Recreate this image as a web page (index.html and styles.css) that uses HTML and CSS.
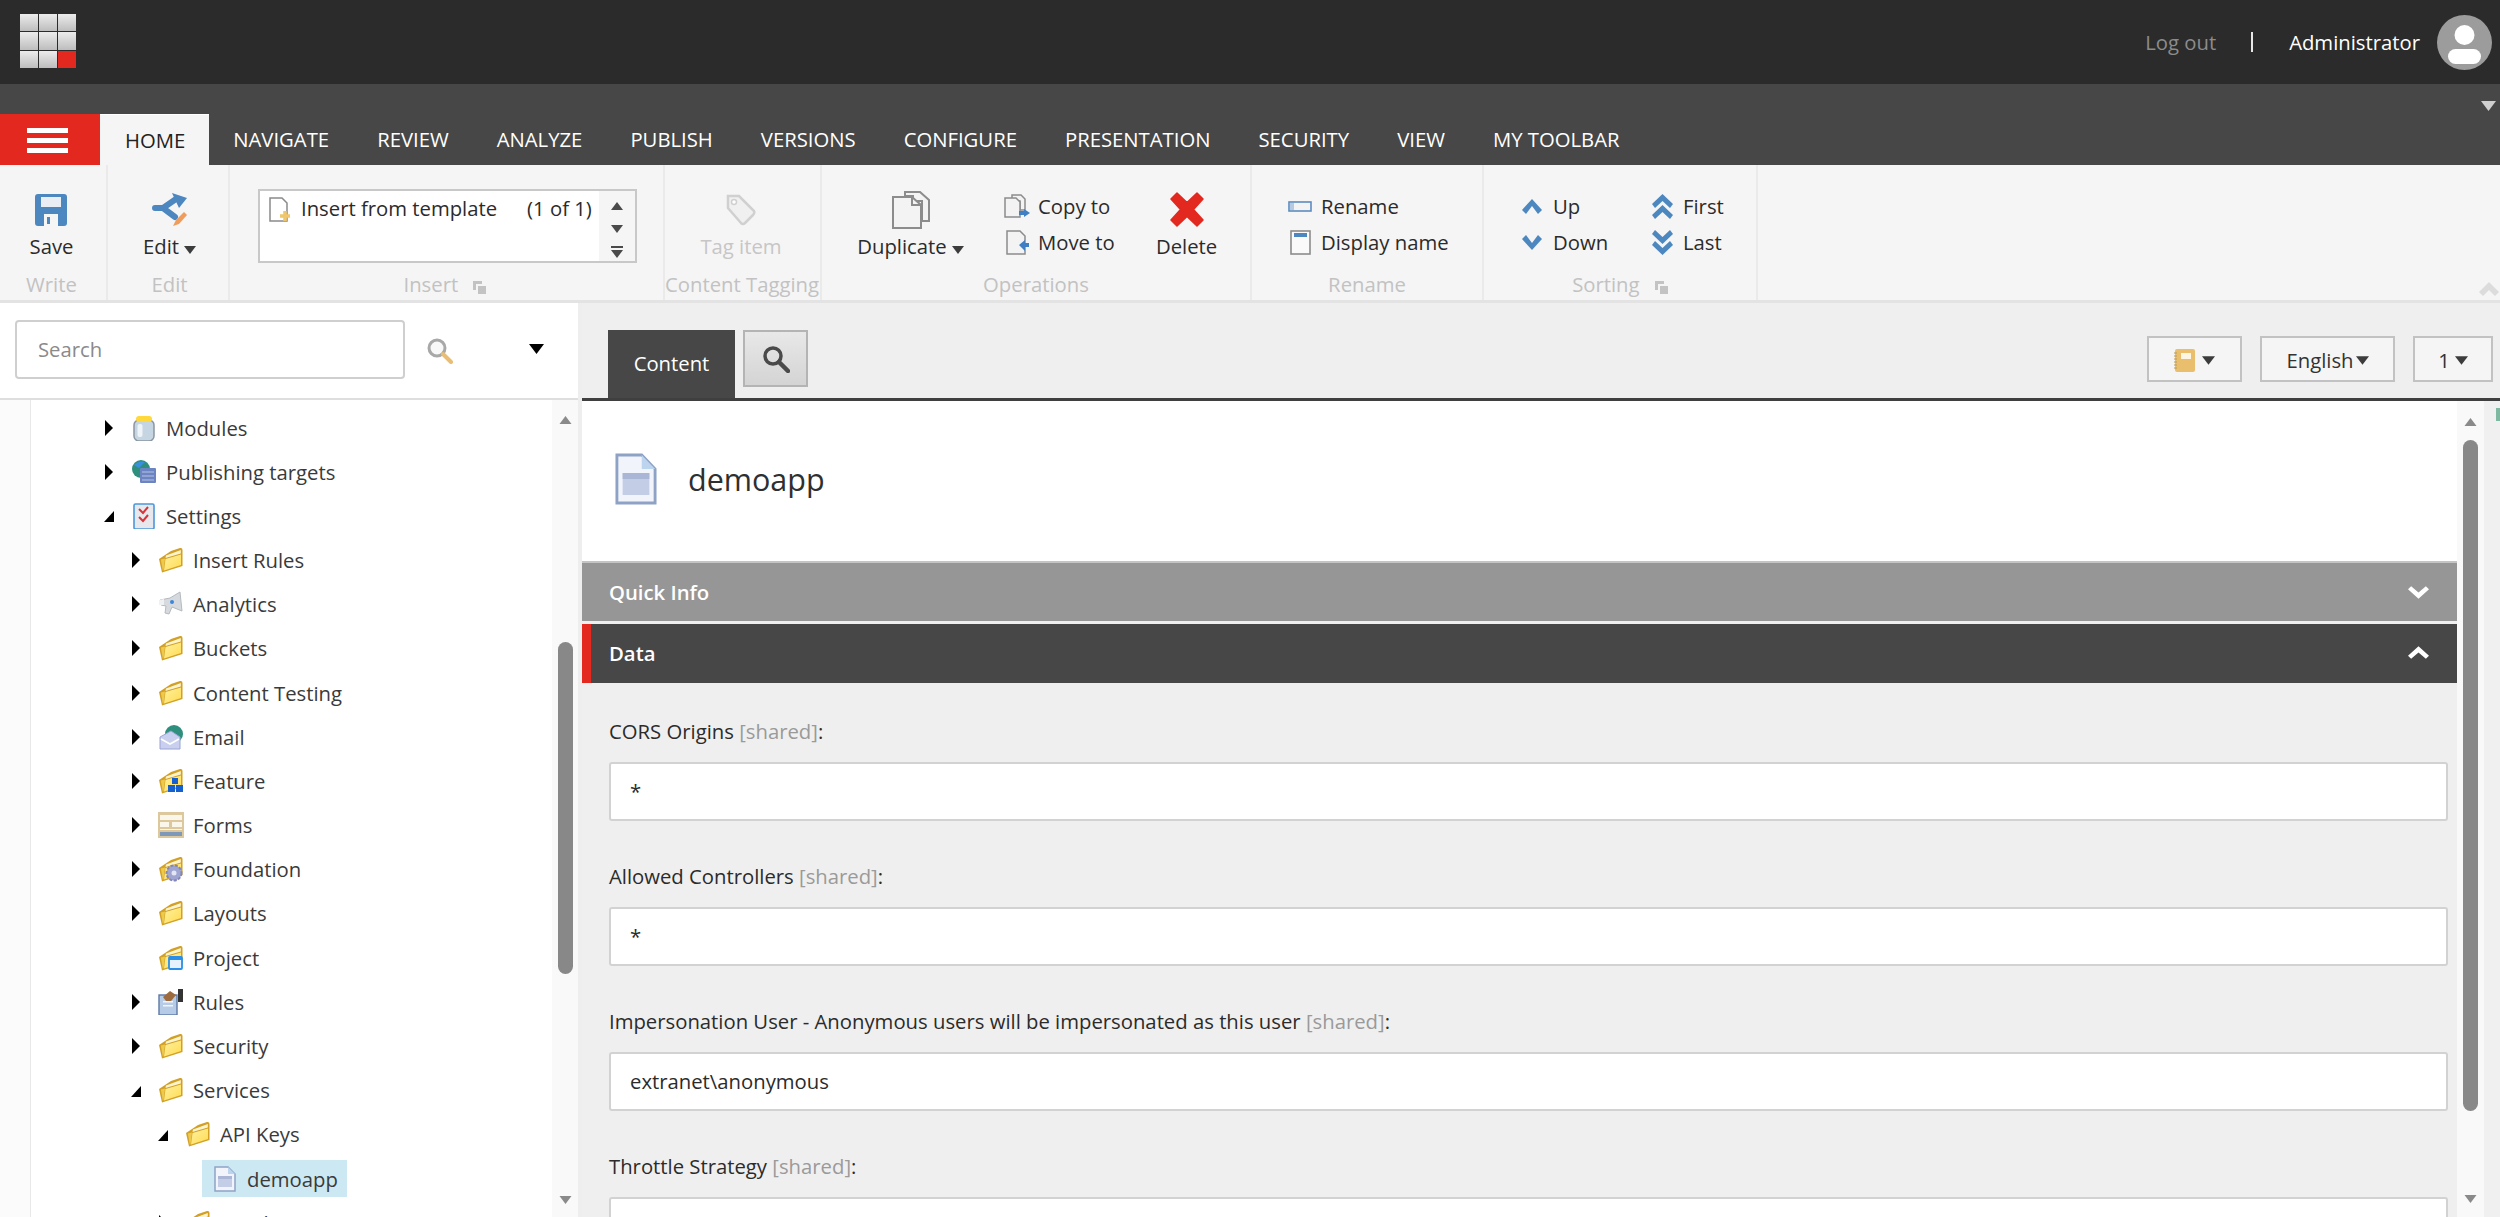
FILE: index.html
```html
<!doctype html>
<html lang="en">
	<head>
		<meta charset="UTF-8">
		<title>Content Editor</title>
		<link rel="stylesheet" href="styles.css">
	</head>
	<body>
		<svg class="defs" xmlns="http://www.w3.org/2000/svg">
			<defs>
				<linearGradient id="folder-fill" x1="0" y1="0" x2="1" y2="1">
					<stop offset="0" stop-color="#fff0a0"/>
					<stop offset="1" stop-color="#ffdc50"/>
				</linearGradient>
			</defs>
			<symbol id="tri-r" viewBox="0 0 10 16"><path d="M1 0L9 8L1 16Z" fill="#000"/></symbol>
			<symbol id="tri-o" viewBox="0 0 10 11"><path d="M10 0V11H0Z" fill="#000"/></symbol>
			<symbol id="tri-d" viewBox="0 0 12 8"><path d="M0 0H12L6 8Z"/></symbol>
			<symbol id="tri-u" viewBox="0 0 12 8"><path d="M6 0L12 8H0Z"/></symbol>
			<symbol id="folder" viewBox="0 0 26 26">
				<path d="M1 12L13 4L22 1Q24.500 0.500 24.500 3V19L4 25.500Z" fill="#d2a024"/>
				<path d="M2.800 12.600L7 11.500L5.500 23.500L4.800 23.500Z" fill="#edc94e"/>
				<path d="M8 8.500L22.800 3V6.500L7.500 11Z" fill="#fdf4cc"/>
				<path d="M7.500 12L23 7.500V18L6 23.500Z" fill="url(#folder-fill)"/>
			</symbol>
			<symbol id="doc" viewBox="0 0 22 26">
				<path d="M1 1H14L21 8V25H1Z" fill="#f1f4fb" stroke="#8ea2c6" stroke-width="1.500"/>
				<path d="M14 1V8H21Z" fill="#bcd4ee"/>
				<rect x="4" y="10" width="14" height="11" fill="#c3cde6"/>
				<rect x="4" y="10" width="14" height="3" fill="#a9b6d6"/>
			</symbol>
		</svg>

		<div class="topbar">
			<div class="logo">
				<i></i><i></i><i></i>
				<i></i><i></i><i></i>
				<i></i><i></i><i class="logo-red"></i>
			</div>
			<a class="logout">Log out</a>
			<span class="divider"></span>
			<span class="username">Administrator</span>
			<svg class="avatar" viewBox="0 0 55 55">
				<circle cx="27.500" cy="27.500" r="27.500" fill="#9c9c9c"/>
				<circle cx="27.500" cy="20" r="10" fill="#fff"/>
				<rect x="11" y="34" width="33" height="15" rx="7.500" fill="#fff"/>
			</svg>
		</div>

		<div class="navbar">
			<div class="navbar-top">
				<svg class="nav-arrow"><use href="#tri-d"/></svg>
			</div>
			<div class="tabs">
				<div class="menu-btn"><i></i><i></i><i></i></div>
				<a class="tab tab-active">HOME</a>
				<a class="tab">NAVIGATE</a>
				<a class="tab">REVIEW</a>
				<a class="tab">ANALYZE</a>
				<a class="tab">PUBLISH</a>
				<a class="tab">VERSIONS</a>
				<a class="tab">CONFIGURE</a>
				<a class="tab">PRESENTATION</a>
				<a class="tab">SECURITY</a>
				<a class="tab">VIEW</a>
				<a class="tab">MY TOOLBAR</a>
			</div>
		</div>

		<div class="ribbon">
			<div class="group g-write">
				<div class="group-body center">
					<div class="big">
						<div class="big-icon">
							<svg width="32" height="32" viewBox="0 0 32 32">
								<path d="M3 0H29Q32 0 32 3V29Q32 32 29 32H3Q0 32 0 29V3Q0 0 3 0Z" fill="#4d87c0"/>
								<rect x="6" y="3" width="20" height="10" fill="#e9eef5"/>
								<rect x="9" y="20" width="14" height="12" fill="#f5f5f5"/>
								<rect x="12" y="23" width="3" height="7" fill="#4d87c0"/>
							</svg>
						</div>
						<span>Save</span>
					</div>
				</div>
				<div class="group-label">Write</div>
			</div>
			<div class="group g-edit">
				<div class="group-body center">
					<div class="big">
						<div class="big-icon">
							<svg width="36" height="36" viewBox="0 0 36 36">
								<path d="M3 16H11L24 7M11 16L23 25" fill="none" stroke="#4d87c0" stroke-width="6" stroke-linecap="round"/>
								<path d="M20 1L35 6L27 16Z" fill="#4d87c0"/>
								<path d="M21 34L24 28L32 20L35 23L27 32Z" fill="#ee9d5c"/>
							</svg>
						</div>
						<span>Edit<svg class="caret"><use href="#tri-d"/></svg></span>
					</div>
				</div>
				<div class="group-label">Edit</div>
			</div>
			<div class="group g-insert">
				<div class="group-body">
					<div class="gallery">
						<div class="gallery-item">
							<svg width="22" height="25" viewBox="0 0 22 25">
								<path d="M1 1H13L18 6V24H1Z" fill="#fff" stroke="#8a8a8a" stroke-width="1.500"/>
								<path d="M16 14V24M11 19H21" stroke="#f0c66a" stroke-width="3.500"/>
							</svg>
							<span class="gallery-name">Insert from template</span>
							<span class="gallery-count">(1 of 1)</span>
						</div>
						<div class="gallery-scroll">
							<svg><use href="#tri-u"/></svg>
							<svg><use href="#tri-d"/></svg>
							<svg class="gallery-more" viewBox="0 0 12 12"><path d="M0 0H12V2H0ZM0 4H12L6 12Z"/></svg>
						</div>
					</div>
				</div>
				<div class="group-label label-shift">Insert
					<svg class="launcher" viewBox="0 0 13 13"><path d="M0 0H9V3H3V9H0ZM5 5H13V13H5Z" fill="#c3c3c3"/></svg>
				</div>
			</div>
			<div class="group g-tag">
				<div class="group-body center">
					<div class="big big-off">
						<div class="big-icon">
							<svg width="30" height="32" viewBox="0 0 30 32">
								<path d="M2 2H13L28 17Q29 19 27 21L19 29Q17 31 15 29L2 14Z" fill="#f0f0f0" stroke="#d0d0d0" stroke-width="2.500"/>
								<circle cx="8" cy="8" r="2.500" fill="#fff" stroke="#d0d0d0" stroke-width="1.500"/>
							</svg>
						</div>
						<span>Tag item</span>
					</div>
				</div>
				<div class="group-label">Content Tagging</div>
			</div>
			<div class="group g-ops">
				<div class="group-body">
					<div class="big big-dup">
						<div class="big-icon">
							<svg width="38" height="38" viewBox="0 0 38 38">
								<path d="M13 1H28L37 9V30H30V10L21 10V5H13Z" fill="#f3f3f3" stroke="#8c8c8c" stroke-width="2"/>
								<path d="M1 6H20L29 14V37H1Z" fill="#f3f3f3" stroke="#8c8c8c" stroke-width="2"/>
								<path d="M20 6V14H29" fill="none" stroke="#8c8c8c" stroke-width="2"/>
							</svg>
						</div>
						<span>Duplicate<svg class="caret"><use href="#tri-d"/></svg></span>
					</div>
					<div class="small-col col-ops">
						<div class="small">
							<div class="small-icon">
								<svg width="26" height="24" viewBox="0 0 26 24">
									<path d="M8 1H17L21 5V16H16V7H8Z" fill="#f3f3f3" stroke="#8c8c8c" stroke-width="1.500"/>
									<path d="M1 4H12L16 8V23H1Z" fill="#f3f3f3" stroke="#8c8c8c" stroke-width="1.500"/>
									<path d="M26 19L20 15V17H15V21H20V23Z" fill="#3f7fc4"/>
								</svg>
							</div>
							<span>Copy to</span>
						</div>
						<div class="small">
							<div class="small-icon">
								<svg width="24" height="25" viewBox="0 0 24 25">
									<path d="M2 1H15L20 6V24H2Z" fill="#f3f3f3" stroke="#8c8c8c" stroke-width="1.500"/>
									<path d="M14 15L20 10V13H24V17H20V21Z" fill="#3f7fc4"/>
								</svg>
							</div>
							<span>Move to</span>
						</div>
					</div>
					<div class="big">
						<div class="big-icon">
							<svg width="34" height="35" viewBox="0 0 34 35">
								<path d="M7 1L17 10.500L27 1L33 7L23.500 17.500L33 28L27 34L17 24.500L7 34L1 28L10.500 17.500L1 7Z" fill="#e2281f" stroke="#e2281f" stroke-width="1.500" stroke-linejoin="round"/>
							</svg>
						</div>
						<span>Delete</span>
					</div>
				</div>
				<div class="group-label">Operations</div>
			</div>
			<div class="group g-rename">
				<div class="group-body">
					<div class="small-col">
						<div class="small">
							<div class="small-icon">
								<svg width="24" height="11" viewBox="0 0 24 11">
									<rect x="1" y="1" width="22" height="9" fill="#f3f3f3" stroke="#5d8cc0" stroke-width="1.600"/>
									<rect x="2" y="2" width="4" height="7" fill="#b5c9e0"/>
								</svg>
							</div>
							<span>Rename</span>
						</div>
						<div class="small">
							<div class="small-icon">
								<svg width="21" height="25" viewBox="0 0 21 25">
									<rect x="1" y="1" width="19" height="23" fill="#fafafa" stroke="#8c8c8c" stroke-width="1.600"/>
									<rect x="4" y="3" width="13" height="4" fill="#4d87c0"/>
								</svg>
							</div>
							<span>Display name</span>
						</div>
					</div>
				</div>
				<div class="group-label">Rename</div>
			</div>
			<div class="group g-sort">
				<div class="group-body">
					<div class="small-col col-sort">
						<div class="small">
							<div class="small-icon">
								<svg width="20" height="15" viewBox="0 0 20 15"><path d="M10 0L20 11L16 15L10 7L4 15L0 11Z" fill="#4d87c0"/></svg>
							</div>
							<span>Up</span>
						</div>
						<div class="small">
							<div class="small-icon">
								<svg width="20" height="15" viewBox="0 0 20 15"><path d="M10 15L20 4L16 0L10 8L4 0L0 4Z" fill="#4d87c0"/></svg>
							</div>
							<span>Down</span>
						</div>
					</div>
					<div class="small-col">
						<div class="small">
							<div class="small-icon">
								<svg width="21" height="25" viewBox="0 0 21 25"><path d="M10.500 0L21 10L18 14L10.500 7L3 14L0 10ZM10.500 11L21 21L18 25L10.500 18L3 25L0 21Z" fill="#4d87c0"/></svg>
							</div>
							<span>First</span>
						</div>
						<div class="small">
							<div class="small-icon">
								<svg width="21" height="25" viewBox="0 0 21 25"><path d="M10.500 25L21 15L18 11L10.500 18L3 11L0 15ZM10.500 14L21 4L18 0L10.500 7L3 0L0 4Z" fill="#4d87c0"/></svg>
							</div>
							<span>Last</span>
						</div>
					</div>
				</div>
				<div class="group-label">Sorting
					<svg class="launcher" viewBox="0 0 13 13"><path d="M0 0H9V3H3V9H0ZM5 5H13V13H5Z" fill="#c3c3c3"/></svg>
				</div>
			</div>
			<svg class="ribbon-collapse" viewBox="0 0 20 14"><path d="M10 0L20 10L16 14L10 8L4 14L0 10Z" fill="#dcdcdc"/></svg>
		</div>

		<div class="main">
			<div class="left">
				<div class="search-row">
					<div class="search-box">Search</div>
					<svg class="search-icon" viewBox="0 0 26 26">
						<circle cx="10" cy="10" r="8" fill="#f8f8f8" stroke="#a8a8a8" stroke-width="3"/>
						<path d="M16 16L24 24" stroke="#e9bd74" stroke-width="4" stroke-linecap="round"/>
					</svg>
					<svg class="search-drop"><use href="#tri-d"/></svg>
				</div>
				<div class="tree-wrap">
					<div class="tree-strip"></div>
					<div class="tree">
						<div class="row l1">
							<svg class="arrow"><use href="#tri-r"/></svg>
							<svg class="ico" viewBox="0 0 26 26">
								<rect x="3" y="5" width="20" height="21" rx="5" fill="#c5d5e2" stroke="#8b97a3" stroke-width="1.500"/>
								<rect x="6.500" y="9" width="5" height="13" rx="2" fill="#eef4f8"/>
								<rect x="5" y="1" width="16" height="6" rx="3" fill="#ffd83b"/>
							</svg>
							<span>Modules</span>
						</div>
						<div class="row l1">
							<svg class="arrow"><use href="#tri-r"/></svg>
							<svg class="ico" viewBox="0 0 26 26">
								<circle cx="10" cy="10" r="9" fill="#2e8f7c"/>
								<path d="M3 6Q8 1 14 3L8 9Z" fill="#3b8fe0"/>
								<rect x="9" y="9" width="16" height="15" rx="1" fill="#6d84c2"/>
								<path d="M11 13H23M11 17H23M11 21H23" stroke="#b6c4e6" stroke-width="1.200"/>
							</svg>
							<span>Publishing targets</span>
						</div>
						<div class="row l1">
							<svg class="arrow arrow-open"><use href="#tri-o"/></svg>
							<svg class="ico" viewBox="0 0 26 26">
								<rect x="3" y="1" width="20" height="25" rx="1.500" fill="#e8e8ec" stroke="#4a97dc" stroke-width="1.600"/>
								<path d="M8 6L12 10L17 4M8 14L12 18L17 12" fill="none" stroke="#d8323a" stroke-width="2"/>
							</svg>
							<span>Settings</span>
						</div>
						<div class="row l2">
							<svg class="arrow"><use href="#tri-r"/></svg>
							<svg class="ico"><use href="#folder"/></svg>
							<span>Insert Rules</span>
						</div>
						<div class="row l2">
							<svg class="arrow"><use href="#tri-r"/></svg>
							<svg class="ico" viewBox="0 0 26 26">
								<path d="M2 9L12 7L22 1L24 20L14 16L11 23L7 22L8 15L3 14Z" fill="#d6dade" stroke="#b5babf"/>
								<circle cx="14" cy="11" r="2" fill="#3b86d6"/>
								<path d="M1 9L6 8V14L1 14Z" fill="#eef0f2"/>
							</svg>
							<span>Analytics</span>
						</div>
						<div class="row l2">
							<svg class="arrow"><use href="#tri-r"/></svg>
							<svg class="ico"><use href="#folder"/></svg>
							<span>Buckets</span>
						</div>
						<div class="row l2">
							<svg class="arrow"><use href="#tri-r"/></svg>
							<svg class="ico"><use href="#folder"/></svg>
							<span>Content Testing</span>
						</div>
						<div class="row l2">
							<svg class="arrow"><use href="#tri-r"/></svg>
							<svg class="ico" viewBox="0 0 26 26">
								<circle cx="16" cy="10" r="9" fill="#2e8f7c"/>
								<path d="M2 13L13 7L22 13V25H2Z" fill="#c9cfee" stroke="#9aa3d6"/>
								<path d="M3 15L12 20L21 15" fill="none" stroke="#fff" stroke-width="1.600"/>
							</svg>
							<span>Email</span>
						</div>
						<div class="row l2">
							<svg class="arrow"><use href="#tri-r"/></svg>
							<svg class="ico" viewBox="0 0 26 26">
								<use href="#folder"/>
								<rect x="14" y="10" width="6" height="6" fill="#1560cf"/>
								<rect x="10" y="17" width="7" height="7" fill="#1560cf"/>
								<rect x="18" y="17" width="7" height="7" fill="#1560cf"/>
							</svg>
							<span>Feature</span>
						</div>
						<div class="row l2">
							<svg class="arrow"><use href="#tri-r"/></svg>
							<svg class="ico" viewBox="0 0 26 26">
								<rect x="0" y="0" width="26" height="26" fill="#dcc89c"/>
								<rect x="2" y="3" width="22" height="5" fill="#faf6ea"/>
								<rect x="2" y="10" width="9" height="5" fill="#faf6ea"/>
								<rect x="14" y="10" width="10" height="5" fill="#faf6ea"/>
								<rect x="2" y="17" width="22" height="1" fill="#faf6ea"/>
								<rect x="2" y="20" width="22" height="4" fill="#7d98b8"/>
							</svg>
							<span>Forms</span>
						</div>
						<div class="row l2">
							<svg class="arrow"><use href="#tri-r"/></svg>
							<svg class="ico" viewBox="0 0 26 26">
								<use href="#folder"/>
								<circle cx="16" cy="17" r="7.500" fill="#9fa5d0" stroke="#8187b8" stroke-dasharray="3 1.500" stroke-width="2"/>
								<circle cx="16" cy="17" r="2.500" fill="#e4e6f4"/>
							</svg>
							<span>Foundation</span>
						</div>
						<div class="row l2">
							<svg class="arrow"><use href="#tri-r"/></svg>
							<svg class="ico"><use href="#folder"/></svg>
							<span>Layouts</span>
						</div>
						<div class="row l2">
							<span class="arrow"></span>
							<svg class="ico" viewBox="0 0 26 26">
								<use href="#folder"/>
								<rect x="11" y="12" width="13" height="12" rx="1" fill="#e6f2fd" stroke="#2a8fe8" stroke-width="1.800"/>
								<rect x="11" y="12" width="13" height="3" fill="#2a8fe8"/>
							</svg>
							<span>Project</span>
						</div>
						<div class="row l2">
							<svg class="arrow"><use href="#tri-r"/></svg>
							<svg class="ico" viewBox="0 0 26 26">
								<rect x="1" y="6" width="18" height="20" fill="#b6cbe6" stroke="#5e78a4" stroke-width="1.400"/>
								<rect x="5" y="12" width="10" height="1.500" fill="#f1f5fb"/>
								<rect x="5" y="16" width="10" height="1.500" fill="#f1f5fb"/>
								<path d="M5 8L12 2L18 6L13 12L8 12Z" fill="#9c6a3c"/>
								<rect x="20" y="0" width="5" height="13" fill="#333"/>
							</svg>
							<span>Rules</span>
						</div>
						<div class="row l2">
							<svg class="arrow"><use href="#tri-r"/></svg>
							<svg class="ico"><use href="#folder"/></svg>
							<span>Security</span>
						</div>
						<div class="row l2">
							<svg class="arrow arrow-open"><use href="#tri-o"/></svg>
							<svg class="ico"><use href="#folder"/></svg>
							<span>Services</span>
						</div>
						<div class="row l3">
							<svg class="arrow arrow-open"><use href="#tri-o"/></svg>
							<svg class="ico"><use href="#folder"/></svg>
							<span>API Keys</span>
						</div>
						<div class="row l-sel">
							<div class="selected">
								<svg class="ico"><use href="#doc"/></svg>
								<span>demoapp</span>
							</div>
						</div>
						<div class="row l3">
							<svg class="arrow"><use href="#tri-r"/></svg>
							<svg class="ico"><use href="#folder"/></svg>
							<span>Rendering Hosts</span>
						</div>
					</div>
					<div class="scroll scroll-left">
						<svg class="scroll-arrow"><use href="#tri-u"/></svg>
						<div class="thumb"></div>
						<svg class="scroll-arrow scroll-down"><use href="#tri-d"/></svg>
					</div>
				</div>
			</div>

			<div class="gutter"></div>

			<div class="right">
				<div class="editor-head">
					<div class="content-tab">Content</div>
					<div class="find-btn">
						<svg width="28" height="28" viewBox="0 0 28 28">
							<circle cx="11" cy="11" r="8" fill="none" stroke="#4a4a4a" stroke-width="3.500"/>
							<path d="M17 17L26 26" stroke="#4a4a4a" stroke-width="4.500" stroke-linecap="round"/>
						</svg>
					</div>
					<div class="head-buttons">
						<div class="head-btn btn-note">
							<svg width="21" height="23" viewBox="0 0 21 23">
								<rect x="1" y="0" width="20" height="23" rx="2" fill="#e9bf6e"/>
								<rect x="7" y="4" width="10" height="6" fill="#fdf6e4"/>
								<path d="M0 4H3M0 7H3M0 10H3M0 13H3M0 16H3M0 19H3" stroke="#b89855" stroke-width="1"/>
							</svg>
							<svg class="head-caret"><use href="#tri-d"/></svg>
						</div>
						<div class="head-btn btn-lang">English<svg class="head-caret"><use href="#tri-d"/></svg></div>
						<div class="head-btn btn-ver">1<svg class="head-caret"><use href="#tri-d"/></svg></div>
					</div>
				</div>
				<div class="editor-body">
					<div class="editor">
						<div class="title">
							<svg class="title-icon" viewBox="0 0 22 26" preserveAspectRatio="none"><use href="#doc"/></svg>
							<span>demoapp</span>
						</div>
						<div class="section section-closed">
							<span>Quick Info</span>
							<svg class="chev" viewBox="0 0 20 12"><path d="M10 12L20 3L17 0L10 6L3 0L0 3Z" fill="#fff"/></svg>
						</div>
						<div class="section section-open">
							<span>Data</span>
							<svg class="chev" viewBox="0 0 20 12"><path d="M10 0L20 9L17 12L10 6L3 12L0 9Z" fill="#fff"/></svg>
						</div>
						<div class="fields">
							<div class="field">
								<label>CORS Origins <span class="shared">[shared]</span>:</label>
								<input class="field-input" type="text" value="*">
							</div>
							<div class="field">
								<label>Allowed Controllers <span class="shared">[shared]</span>:</label>
								<input class="field-input" type="text" value="*">
							</div>
							<div class="field">
								<label>Impersonation User - Anonymous users will be impersonated as this user <span class="shared">[shared]</span>:</label>
								<input class="field-input" type="text" value="extranet\anonymous">
							</div>
							<div class="field">
								<label>Throttle Strategy <span class="shared">[shared]</span>:</label>
								<input class="field-input" type="text" value="">
							</div>
						</div>
					</div>
					<div class="scroll scroll-right">
						<svg class="scroll-arrow"><use href="#tri-u"/></svg>
						<div class="thumb"></div>
						<svg class="scroll-arrow scroll-down"><use href="#tri-d"/></svg>
					</div>
					<div class="overview"><i></i></div>
				</div>
			</div>
		</div>
	</body>
</html>
```
FILE: styles.css
```css
* {
	box-sizing: border-box;
}
html, body {
	margin: 0;
	height: 1217px;
	overflow: hidden;
}
body {
	font-family: "Open Sans", "Liberation Sans", sans-serif;
	font-size: 20.300px;
	color: #2b2b2b;
	background: #f0f0f0;
}
.defs {
	position: absolute;
	width: 0;
	height: 0;
}

/* top bar */
.topbar {
	height: 84px;
	background: #2b2b2b;
	display: flex;
	align-items: center;
	padding: 0 8px 0 20px;
}
.logo {
	display: grid;
	grid-template-columns: repeat(3, 18px);
	grid-auto-rows: 17.500px;
	gap: 1px;
	margin-top: -2px;
}
.logo i {
	background: linear-gradient(#ececec, #bdbdbd);
}
.logo .logo-red {
	background: #e2281f;
}
.logout {
	margin-left: auto;
	color: #8b8b8b;
}
.divider {
	width: 2px;
	height: 20px;
	background: #e8e8e8;
	margin: 0 36px 0 35px;
}
.username {
	color: #fff;
}
.avatar {
	width: 55px;
	height: 55px;
	margin-left: 17px;
}

/* tabs */
.navbar {
	height: 81px;
	background: #474747;
}
.navbar-top {
	height: 30px;
	display: flex;
	justify-content: flex-end;
	padding: 16px 4px 0 0;
}
.nav-arrow {
	width: 15px;
	height: 12px;
	fill: #cfcfcf;
}
.tabs {
	height: 51px;
	display: flex;
}
.menu-btn {
	width: 100px;
	background: #e2281f;
	display: flex;
	flex-direction: column;
	gap: 5px;
	padding: 14px 0 0 27px;
}
.menu-btn i {
	display: block;
	width: 41px;
	height: 5px;
	background: #fff;
}
.tab {
	color: #fff;
	line-height: 50px;
	padding: 0 24px;
	white-space: nowrap;
}
.tab-active {
	background: #f5f5f5;
	color: #222;
	padding-left: 25px;
	border-top: 1px solid #fff;
}

/* ribbon */
.ribbon {
	height: 138px;
	background: #f5f5f5;
	border-bottom: 3px solid #e3e3e3;
	display: flex;
}
.group {
	border-right: 2px solid #eaeaea;
	display: flex;
	flex-direction: column;
}
.g-write { width: 108px; padding-right: 3px; }
.g-edit { width: 122px; padding-left: 3px; }
.g-insert { width: 435px; }
.g-tag { width: 157px; padding-right: 3px; }
.g-ops { width: 430px; }
.g-rename { width: 232px; }
.g-sort { width: 274px; }
.group-body {
	height: 104px;
	padding-top: 24px;
	display: flex;
}
.g-ops .group-body { padding-left: 35px; }
.g-rename .group-body { padding-left: 34px; }
.g-sort .group-body { padding-left: 34px; }
.center {
	justify-content: center;
}
.group-label {
	text-align: center;
	color: #c2c2c2;
	line-height: 30px;
	white-space: nowrap;
}
.label-shift {
	padding-right: 3px;
}
.launcher {
	width: 13px;
	height: 13px;
	margin-left: 10px;
	vertical-align: -2px;
}
.big {
	display: flex;
	flex-direction: column;
	align-items: center;
	white-space: nowrap;
}
.big-icon {
	height: 41px;
	display: flex;
	align-items: center;
	justify-content: center;
}
.big > span {
	line-height: 32px;
}
.big-off {
	color: #c6c6c6;
}
.big-dup {
	width: 107px;
}
.caret {
	width: 12px;
	height: 8px;
	fill: #3c3c3c;
	margin-left: 5px;
}
.small-col {
	white-space: nowrap;
	margin-top: -1px;
}
.col-ops {
	width: 153px;
	margin-left: 39px;
}
.col-sort {
	width: 130px;
}
.small {
	height: 36px;
	display: flex;
	align-items: center;
	gap: 7px;
}
.small-icon {
	width: 28px;
	display: flex;
	justify-content: center;
}
.gallery {
	width: 379px;
	height: 74px;
	margin-left: 28px;
	border: 2px solid #c8c8c8;
	background: #fff;
	display: flex;
}
.gallery-item {
	flex: 1;
	display: flex;
	align-items: flex-start;
	padding: 5px 0 0 9px;
	line-height: 24px;
}
.gallery-item svg {
	margin-top: 1px;
}
.gallery-name {
	margin-left: 10px;
}
.gallery-count {
	margin-left: 30px;
}
.gallery-scroll {
	width: 36px;
	background: #f5f5f5;
	display: flex;
	flex-direction: column;
	align-items: center;
	padding-top: 9px;
	gap: 11px;
}
.gallery-scroll svg {
	width: 12px;
	height: 12px;
	fill: #4a4a4a;
}
.ribbon-collapse {
	width: 20px;
	height: 14px;
	margin: 117px 1px 0 auto;
}

/* main area */
.main {
	height: 914px;
	display: flex;
}
.left {
	width: 578px;
	background: #fff;
	display: flex;
	flex-direction: column;
}
.gutter {
	width: 4px;
	background: #eeeeee;
}
.search-row {
	height: 97px;
	border-bottom: 2px solid #dedede;
	display: flex;
	align-items: flex-start;
	padding: 17px 0 0 15px;
}
.search-box {
	width: 390px;
	height: 59px;
	border: 2px solid #cfcfcf;
	border-radius: 4px;
	color: #8a8a8a;
	padding-left: 21px;
	line-height: 55px;
}
.search-icon {
	width: 26px;
	height: 26px;
	margin: 18px 0 0 22px;
}
.search-drop {
	width: 17px;
	height: 10px;
	margin: 24px 0 0 75px;
	fill: #000;
}
.tree-wrap {
	flex: 1;
	display: flex;
	min-height: 0;
}
.tree-strip {
	width: 31px;
	background: #fbfbfb;
	border-right: 1px solid #e8e8e8;
}
.tree {
	flex: 1;
	padding-top: 5.500px;
	overflow: hidden;
}
.row {
	height: 44.180px;
	display: flex;
	align-items: center;
	color: #3a3a3a;
	white-space: nowrap;
}
.l1 { padding-left: 73px; }
.l2 { padding-left: 100px; }
.l3 { padding-left: 127px; }
.l-sel { padding-left: 171px; }
.arrow {
	width: 10px;
	height: 16px;
	margin-right: 17px;
	flex: none;
}
.arrow-open {
	height: 11px;
	margin-top: 2px;
}
.ico {
	width: 26px;
	height: 26px;
	margin-right: 9px;
	flex: none;
}
.selected {
	height: 37px;
	background: #cce8f2;
	display: flex;
	align-items: center;
	padding: 0 9px 0 10px;
}

/* scrollbars */
.scroll {
	background: #f9f9f9;
	display: flex;
	flex-direction: column;
}
.scroll-left {
	width: 26px;
	padding-left: 6px;
}
.scroll-arrow {
	width: 15px;
	height: 8px;
	fill: #8a8a8a;
	flex: none;
}
.scroll-left .scroll-arrow:first-child {
	margin-top: 16px;
}
.thumb {
	width: 15px;
	background: #888;
	border-radius: 8px;
	flex: none;
}
.scroll-left .thumb {
	height: 332px;
	margin-top: 218px;
}
.scroll-left .scroll-down {
	margin-top: 222px;
}
.scroll-right {
	width: 27px;
	padding-left: 6px;
}
.scroll-right .scroll-arrow:first-child {
	margin-top: 17px;
}
.scroll-right .thumb {
	height: 671px;
	margin-top: 14px;
}
.scroll-right .scroll-down {
	margin-top: 84px;
}

/* editor */
.right {
	flex: 1;
	display: flex;
	flex-direction: column;
	min-width: 0;
}
.editor-head {
	height: 98px;
	background: #efefef;
	border-bottom: 3px solid #3f3f3f;
	display: flex;
	align-items: flex-start;
	padding: 27px 7px 0 26px;
}
.content-tab {
	width: 127px;
	height: 68px;
	background: #474747;
	color: #fff;
	text-align: center;
	line-height: 67px;
}
.find-btn {
	width: 65px;
	height: 57px;
	margin-left: 8px;
	background: linear-gradient(#e8e8e8, #d4d4d4);
	border: 2px solid #b4b4b4;
	display: flex;
	align-items: center;
	justify-content: center;
}
.head-buttons {
	margin-left: auto;
	margin-top: 6px;
	display: flex;
	gap: 18px;
}
.head-btn {
	height: 46px;
	padding-top: 2px;
	background: #f5f5f5;
	border: 2px solid #c2c2c2;
	display: flex;
	align-items: center;
	justify-content: center;
	color: #333;
}
.btn-note { width: 95px; gap: 7px; }
.btn-lang { width: 135px; gap: 2px; }
.btn-ver { width: 80px; gap: 5px; }
.head-caret {
	width: 13px;
	height: 9px;
	fill: #3c3c3c;
}
.editor-body {
	flex: 1;
	display: flex;
	min-height: 0;
	background: #f0f0f0;
}
.editor {
	width: 1875px;
	background: #efefef;
	overflow: hidden;
}
.title {
	height: 160px;
	background: #fff;
	display: flex;
	align-items: center;
	padding: 0 0 4px 33px;
	font-size: 30.500px;
	color: #2f2f2f;
}
.title-icon {
	width: 42px;
	height: 52px;
	margin-right: 31px;
}
.section {
	height: 60px;
	display: flex;
	align-items: center;
	justify-content: space-between;
	padding: 0 28px 0 27px;
	color: #fff;
	font-weight: 600;
}
.section-closed {
	background: #969696;
	border-top: 2px solid #c4c4c4;
	margin-bottom: 3px;
}
.section-open {
	height: 59px;
	background: #474747;
	border-left: 9px solid #e2281f;
	padding: 0 28px 2px 18px;
}
.chev {
	width: 21px;
	height: 13px;
}
.fields {
	padding: 33px 9px 0 27px;
}
.field {
	margin-bottom: 40px;
}
.field label {
	display: block;
	line-height: 30px;
	margin-bottom: 16px;
	color: #2b2b2b;
}
.shared {
	color: #9a9a9a;
}
.field-input {
	display: block;
	width: 100%;
	height: 59px;
	border: 2px solid #d2d2d2;
	border-radius: 3px;
	background: #fff;
	padding: 0 0 2px 19px;
	font-family: inherit;
	font-size: 20.300px;
	color: #2b2b2b;
}
.overview {
	flex: 1;
	background: #f0f0f0;
	padding-top: 7px;
	display: flex;
	justify-content: flex-end;
	align-items: flex-start;
}
.overview i {
	display: block;
	width: 4px;
	height: 13px;
	background: #7fb8a0;
}
```
